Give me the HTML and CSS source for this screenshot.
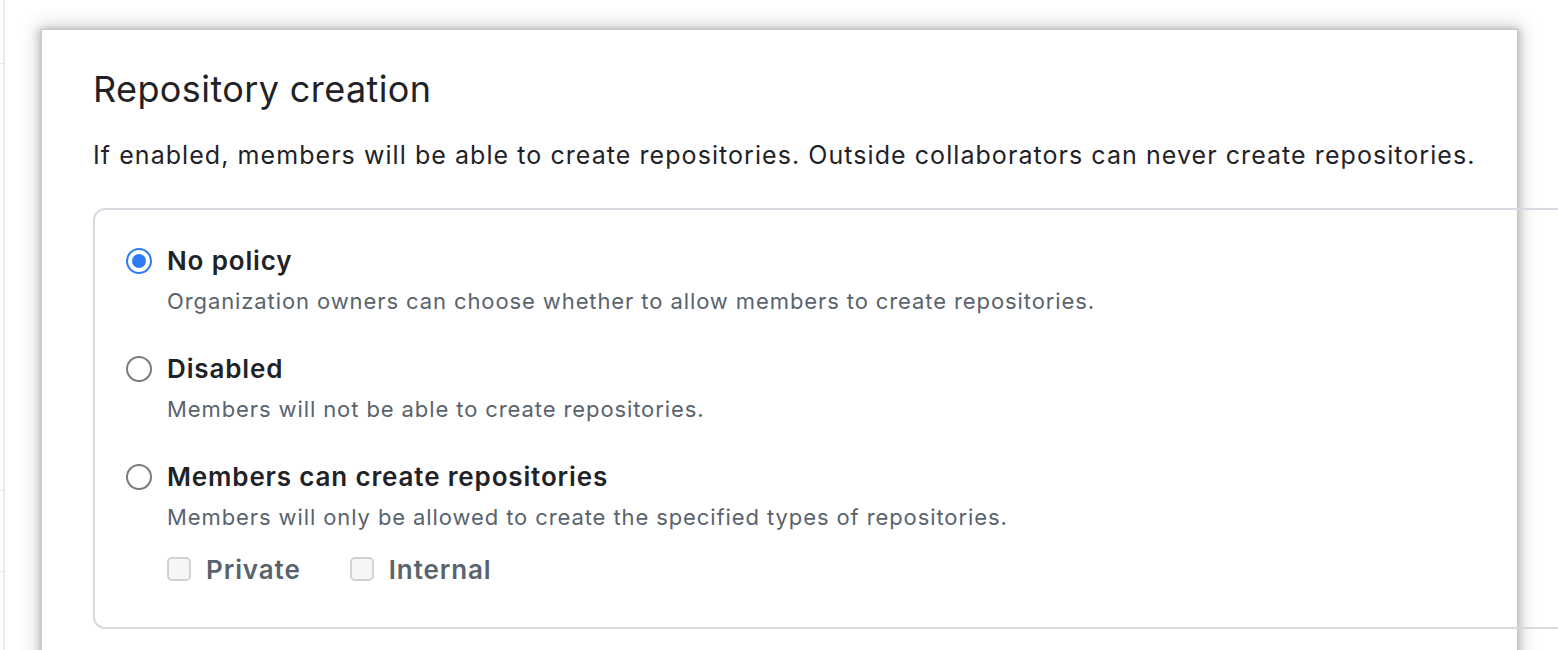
FILE: index.html
```html
<!DOCTYPE html>
<html lang="en">
<head>
<meta charset="utf-8">
<title>Repository creation</title>
<link rel="stylesheet" href="styles.css">
</head>
<body>
<div class="page">
  <div class="side">
    <span class="tick t1"></span>
    <span class="tick t2"></span>
    <span class="tick t3"></span>
  </div>
  <div class="card">
    <h2 class="title">Repository creation</h2>
    <p class="lead">If enabled, members will be able to create repositories. Outside collaborators can never create repositories.</p>
    <div class="box">
      <div class="option">
        <span class="radio checked"><span class="dot"></span></span>
        <div class="option-body">
          <div class="option-title">No policy</div>
          <div class="option-note">Organization owners can choose whether to allow members to create repositories.</div>
        </div>
      </div>
      <div class="option">
        <span class="radio"></span>
        <div class="option-body">
          <div class="option-title">Disabled</div>
          <div class="option-note">Members will not be able to create repositories.</div>
        </div>
      </div>
      <div class="option">
        <span class="radio"></span>
        <div class="option-body">
          <div class="option-title">Members can create repositories</div>
          <div class="option-note">Members will only be allowed to create the specified types of repositories.</div>
          <div class="checks">
            <label class="check"><span class="checkbox"></span><span class="check-label">Private</span></label>
            <label class="check"><span class="checkbox"></span><span class="check-label">Internal</span></label>
          </div>
        </div>
      </div>
    </div>
  </div>
</div>
</body>
</html>
```

FILE: styles.css
```css
html, body {
  margin: 0;
  padding: 0;
  background: #ffffff;
  overflow: hidden;
  height: 650px;
}

body {
  font-family: Inter, "Noto Sans", "Liberation Sans", sans-serif;
  color: #1f2328;
}

.page {
  display: flex;
  align-items: flex-start;
  height: 650px;
  overflow: hidden;
}

.side {
  width: 3px;
  height: 650px;
  border-right: 2px solid #e8ebef;
  display: flex;
  flex-direction: column;
  flex-shrink: 0;
}

.tick {
  display: block;
  height: 1px;
  background: #e3e6ea;
}

.t1 { margin-top: 63px; }
.t2 { margin-top: 426px; }
.t3 { margin-top: 80px; }

.card {
  margin-left: 36px;
  margin-top: 29px;
  width: 1477px;
  height: 700px;
  flex-shrink: 0;
  border: 1px solid #c8c8c8;
  background: #ffffff;
  box-shadow: 0 0 16px 5px rgba(0, 0, 0, 0.15), -3px 0 6px rgba(0, 0, 0, 0.12), 3px 0 6px rgba(0, 0, 0, 0.12);
  padding: 37px 0 0 51px;
  box-sizing: border-box;
  overflow: visible;
}

.title {
  margin: 0;
  font-size: 36px;
  line-height: 45px;
  font-weight: 400;
  color: #1f2328;
  letter-spacing: 0.4px;
}

.lead {
  margin: 25px 0 0;
  font-size: 25px;
  line-height: 36px;
  letter-spacing: 1.06px;
  color: #1f2328;
}

.box {
  margin-top: 35px;
  width: 1500px;
  border: 2px solid #d6dae0;
  border-radius: 12px;
  padding: 33px 0 40px 31px;
  box-sizing: border-box;
  display: flex;
  flex-direction: column;
  gap: 35px;
}

.option {
  display: flex;
  align-items: flex-start;
  gap: 15px;
}

.radio {
  width: 26px;
  height: 26px;
  margin-top: 5px;
  border: 2px solid #7a7a7a;
  border-radius: 50%;
  box-sizing: border-box;
  display: flex;
  align-items: center;
  justify-content: center;
  flex-shrink: 0;
  background: #fff;
}

.radio.checked {
  border: 2px solid #2f7bf5;
}

.dot {
  width: 14px;
  height: 14px;
  border-radius: 50%;
  background: #2f7bf5;
}

.option-title {
  font-size: 26px;
  line-height: 36px;
  font-weight: 600;
  letter-spacing: 0.85px;
  color: #1f2328;
}

.option-note {
  margin-top: 7px;
  font-size: 22px;
  line-height: 30px;
  letter-spacing: 0.9px;
  color: #59636e;
}

.checks {
  margin-top: 19px;
  display: flex;
  gap: 49px;
}

.check {
  display: flex;
  align-items: center;
  gap: 15px;
  height: 36px;
}

.checkbox {
  width: 24px;
  height: 24px;
  border: 2px solid #d2d2d2;
  border-radius: 5px;
  background: #f6f6f6;
  box-sizing: border-box;
}

.check-label {
  font-size: 26px;
  font-weight: 600;
  letter-spacing: 0.9px;
  color: #59636e;
}
```
